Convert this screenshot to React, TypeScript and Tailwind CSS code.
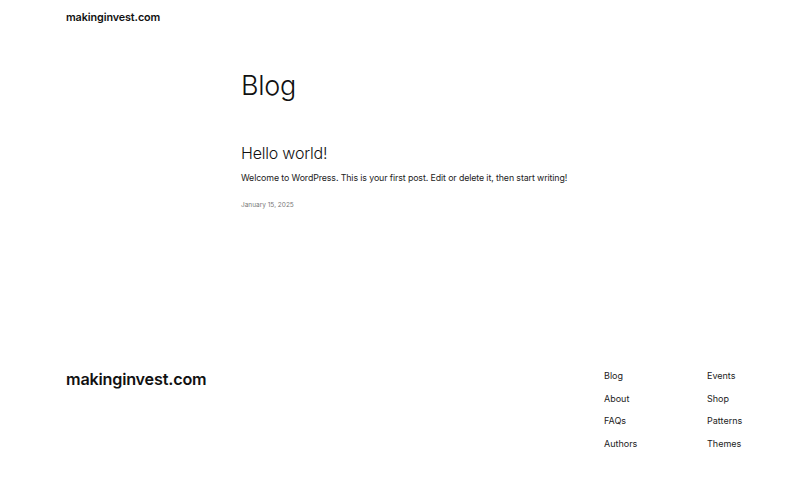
export default function App() {
    const col1 = ["Blog", "About", "FAQs", "Authors"];
    const col2 = ["Events", "Shop", "Patterns", "Themes"];
    return (
        <div className="w-[800px] h-[496px] bg-white text-[#111111] font-['Inter',sans-serif] flex flex-col">
            <header className="px-[66px] pt-[11px] h-[40px]">
                <a className="block text-[10.8px] leading-[14px] font-semibold tracking-[-0.1px]">makinginvest.com</a>
            </header>
            <main className="pl-[241px] flex flex-col">
                <h1 className="mt-[30px] text-[27px] leading-[32px] tracking-[-0.3px] font-light">Blog</h1>
                <article className="mt-[40px] flex flex-col">
                    <h2 className="text-[16px] leading-[22px] tracking-[-0.2px] font-light">Hello world!</h2>
                    <p className="mt-[7px] text-[8.8px] leading-[13px] tracking-[-0.1px] text-[#222]">
                        Welcome to WordPress. This is your first post. Edit or delete it, then start writing!
                    </p>
                    <div className="mt-[17px] text-[6.5px] text-[#777]">January 15, 2025</div>
                </article>
            </main>
            <footer className="mt-auto h-[140px] pr-[43px] pl-[66px] flex">
                <div className="pt-[11px] text-[16.2px] font-semibold tracking-[-0.2px]">makinginvest.com</div>
                <div className="ml-auto flex">
                    <ul className="w-[103px] pt-[13px] flex flex-col gap-[8.6px] text-[9px] leading-[14px] text-[#222]">
                        {col1.map((l) => (
                            <li key={l}>{l}</li>
                        ))}
                    </ul>
                    <ul className="w-[50px] pt-[13px] flex flex-col gap-[8.6px] text-[9px] leading-[14px] text-[#222]">
                        {col2.map((l) => (
                            <li key={l}>{l}</li>
                        ))}
                    </ul>
                </div>
            </footer>
        </div>
    );
}
